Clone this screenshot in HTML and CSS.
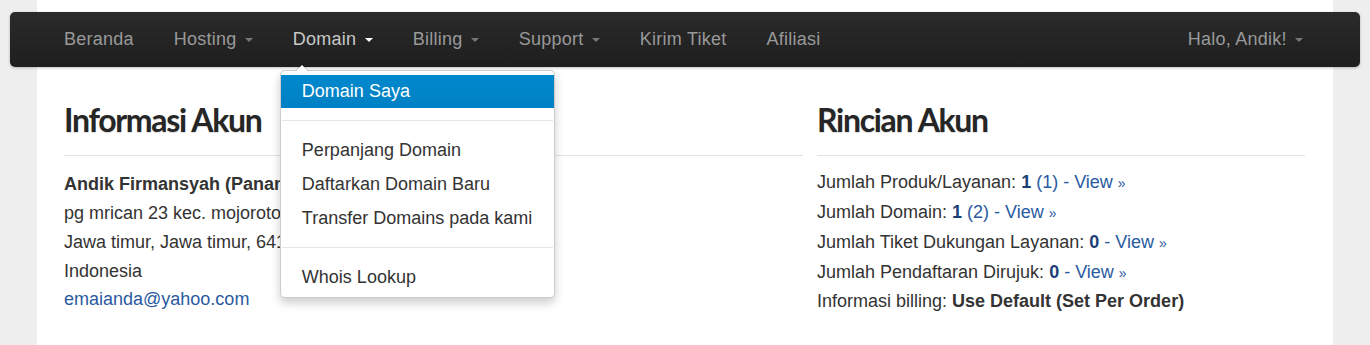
FILE: index.html
```html
<!DOCTYPE html>
<html lang="id">
<head>
    <meta charset="UTF-8">
    <title>Client Area</title>
    <link rel="stylesheet" href="styles.css">
</head>
<body>

<div class="page">

    <div class="navbar">
        <ul class="nav">
            <li><a href="#">Beranda</a></li>
            <li><a href="#">Hosting <b class="caret"></b></a></li>
            <li class="open">
                <a href="#">Domain <b class="caret"></b></a>
                <ul class="dropdown-menu">
                    <li class="active"><a href="#">Domain Saya</a></li>
                    <li class="divider"></li>
                    <li><a href="#">Perpanjang Domain</a></li>
                    <li><a href="#">Daftarkan Domain Baru</a></li>
                    <li><a href="#">Transfer Domains pada kami</a></li>
                    <li class="divider"></li>
                    <li><a href="#">Whois Lookup</a></li>
                </ul>
            </li>
            <li><a href="#">Billing <b class="caret"></b></a></li>
            <li><a href="#">Support <b class="caret"></b></a></li>
            <li><a href="#">Kirim Tiket</a></li>
            <li><a href="#">Afiliasi</a></li>
        </ul>
        <ul class="nav nav-right">
            <li><a href="#">Halo, Andik! <b class="caret"></b></a></li>
        </ul>
    </div>

    <div class="columns">
        <div class="col">
            <h2>Informasi Akun</h2>
            <p class="info">
                <strong>Andik Firmansyah (Panangan Hosting)</strong><br>
                pg mrican 23 kec. mojoroto, Kediri<br>
                Jawa timur, Jawa timur, 64115<br>
                Indonesia<br>
                <a href="#">emaianda@yahoo.com</a>
            </p>
        </div>
        <div class="col">
            <h2>Rincian Akun</h2>
            <p class="info info-right">
                Jumlah Produk/Layanan: <strong class="num">1</strong> <a href="#">(1) - View <span class="raquo">&raquo;</span></a><br>
                Jumlah Domain: <strong class="num">1</strong> <a href="#">(2) - View <span class="raquo">&raquo;</span></a><br>
                Jumlah Tiket Dukungan Layanan: <strong class="num">0</strong> <a href="#">- View <span class="raquo">&raquo;</span></a><br>
                Jumlah Pendaftaran Dirujuk: <strong class="num">0</strong> <a href="#">- View <span class="raquo">&raquo;</span></a><br>
                Informasi billing: <strong>Use Default (Set Per Order)</strong>
            </p>
        </div>
    </div>

</div>

</body>
</html>
```

FILE: styles.css
```css
html, body {
    margin: 0;
    height: 100%;
    overflow: hidden;
}

body {
    font-family: "Liberation Sans", Arial, sans-serif;
    font-size: 18px;
    color: #333;
    background-color: #eeeeee;
}

a {
    color: #2a5aa0;
    text-decoration: none;
}

.page {
    width: 1242px;
    min-height: 345px;
    margin-left: 37px;
    padding: 12px 27px 0;
    background-color: #fff;
}

/* top navbar, a bit wider than the page */
.navbar {
    display: flex;
    justify-content: space-between;
    height: 55px;
    margin: 0 -54px;
    padding: 0 37px 0 34px;
    border-radius: 5px;
    background: linear-gradient(#2b2b2b, #1e1e1e);
    box-shadow: 0 1px 3px rgba(0, 0, 0, 0.25);
}

.nav {
    display: flex;
    margin: 0;
    padding: 0;
    list-style: none;
}

.nav > li {
    position: relative;
}

.nav > li > a {
    display: block;
    padding: 0 20px;
    line-height: 55px;
    color: #999;
    letter-spacing: 0.25px;
}

.nav > li.open > a {
    color: #c8c8c8;
}

.caret {
    display: inline-block;
    width: 0;
    height: 0;
    margin-left: 3px;
    vertical-align: middle;
    border-top: 4px solid #777;
    border-left: 4px solid transparent;
    border-right: 4px solid transparent;
}

.nav > li.open .caret {
    border-top-color: #fff;
}

/* dropdown */
.dropdown-menu {
    position: absolute;
    top: 58px;
    left: 7px;
    z-index: 10;
    width: 273px;
    margin: 0;
    padding: 4px 0 3px;
    list-style: none;
    background-color: #fff;
    border: 1px solid rgba(0, 0, 0, 0.2);
    border-radius: 5px;
    box-shadow: 0 5px 10px rgba(0, 0, 0, 0.2);
    letter-spacing: 0;
}

.dropdown-menu:before,
.dropdown-menu:after {
    content: "";
    position: absolute;
    border-left: 7px solid transparent;
    border-right: 7px solid transparent;
}

.dropdown-menu:before {
    top: -7px;
    left: 14px;
    border-bottom: 7px solid rgba(0, 0, 0, 0.2);
}

.dropdown-menu:after {
    top: -6px;
    left: 15px;
    border-left-width: 6px;
    border-right-width: 6px;
    border-bottom: 6px solid #fff;
}

.dropdown-menu a {
    display: block;
    padding: 0 21px;
    line-height: 34px;
    color: #333;
    white-space: nowrap;
}

.dropdown-menu .active a {
    line-height: 33px;
    color: #fff;
    background: linear-gradient(#0088cc, #0080c4);
}

.dropdown-menu .divider {
    height: 1px;
    margin: 12px 1px;
    background-color: #e5e5e5;
}

/* content */
.columns {
    display: grid;
    grid-template-columns: 739px 488px;
    gap: 14px;
}

h2 {
    margin: 34px 0 0;
    padding-bottom: 16px;
    border-bottom: 1px solid #e2e2e2;
    font-family: Lato, "Open Sans", sans-serif;
    font-size: 32px;
    font-weight: 700;
    line-height: 1.2;
    letter-spacing: -1.3px;
    color: #262626;
    text-shadow: 0 1px 1px rgba(0, 0, 0, 0.15);
}

.info {
    margin: 14px 0 0;
    line-height: 28.75px;
}

.info-right {
    margin-top: 12px;
}

.num {
    color: #1d3f78;
}

.raquo {
    font-size: 14px;
}
```
